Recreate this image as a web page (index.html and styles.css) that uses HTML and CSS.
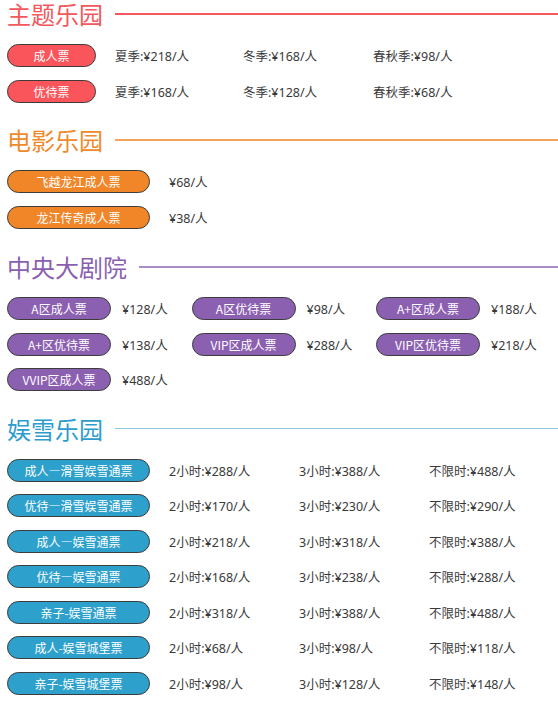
FILE: index.html
```html
<!DOCTYPE html>
<html lang="zh">
<head>
<meta charset="utf-8">
<link rel="stylesheet" href="styles.css">
</head>
<body>
<section class="sec red">
  <h2 class="title"><span>主题乐园</span><i class="line"></i></h2>
  <div class="row cols3">
    <span class="pill w89">成人票</span>
    <div class="prices"><span>夏季:¥218/人</span><span>冬季:¥168/人</span><span>春秋季:¥98/人</span></div>
  </div>
  <div class="row cols3">
    <span class="pill w89">优待票</span>
    <div class="prices"><span>夏季:¥168/人</span><span>冬季:¥128/人</span><span>春秋季:¥68/人</span></div>
  </div>
</section>

<section class="sec orange">
  <h2 class="title"><span>电影乐园</span><i class="line"></i></h2>
  <div class="row">
    <span class="pill w143">飞越龙江成人票</span>
    <div class="prices"><span>¥68/人</span></div>
  </div>
  <div class="row">
    <span class="pill w143">龙江传奇成人票</span>
    <div class="prices"><span>¥38/人</span></div>
  </div>
</section>

<section class="sec purple">
  <h2 class="title"><span>中央大剧院</span><i class="line"></i></h2>
  <div class="grid3">
    <div class="cell"><span class="pill w104">A区成人票</span><span>¥128/人</span></div>
    <div class="cell"><span class="pill w104">A区优待票</span><span>¥98/人</span></div>
    <div class="cell"><span class="pill w104">A+区成人票</span><span>¥188/人</span></div>
    <div class="cell"><span class="pill w104">A+区优待票</span><span>¥138/人</span></div>
    <div class="cell"><span class="pill w104">VIP区成人票</span><span>¥288/人</span></div>
    <div class="cell"><span class="pill w104">VIP区优待票</span><span>¥218/人</span></div>
    <div class="cell"><span class="pill w104">VVIP区成人票</span><span>¥488/人</span></div>
  </div>
</section>

<section class="sec blue">
  <h2 class="title"><span>娱雪乐园</span><i class="line"></i></h2>
  <div class="row"><span class="pill w143">成人—滑雪娱雪通票</span><div class="prices"><span>2小时:¥288/人</span><span>3小时:¥388/人</span><span>不限时:¥488/人</span></div></div>
  <div class="row"><span class="pill w143">优待—滑雪娱雪通票</span><div class="prices"><span>2小时:¥170/人</span><span>3小时:¥230/人</span><span>不限时:¥290/人</span></div></div>
  <div class="row"><span class="pill w143">成人—娱雪通票</span><div class="prices"><span>2小时:¥218/人</span><span>3小时:¥318/人</span><span>不限时:¥388/人</span></div></div>
  <div class="row"><span class="pill w143">优待—娱雪通票</span><div class="prices"><span>2小时:¥168/人</span><span>3小时:¥238/人</span><span>不限时:¥288/人</span></div></div>
  <div class="row"><span class="pill w143">亲子-娱雪通票</span><div class="prices"><span>2小时:¥318/人</span><span>3小时:¥388/人</span><span>不限时:¥488/人</span></div></div>
  <div class="row"><span class="pill w143">成人-娱雪城堡票</span><div class="prices"><span>2小时:¥68/人</span><span>3小时:¥98/人</span><span>不限时:¥118/人</span></div></div>
  <div class="row"><span class="pill w143">亲子-娱雪城堡票</span><div class="prices"><span>2小时:¥98/人</span><span>3小时:¥128/人</span><span>不限时:¥148/人</span></div></div>
</section>
</body>
</html>
```
FILE: styles.css
```css
html, body {
  margin: 0;
  padding: 0;
  background: #fff;
}
body {
  padding: 0 0 0 7px;
  font-family: "Noto Sans", "Noto Sans CJK SC", sans-serif;
  font-size: 12.5px;
  color: #3a3a3a;
}
.sec {
  margin-bottom: 17px;
}
.orange {
  margin-bottom: 18px;
}
.title {
  display: flex;
  align-items: center;
  height: 28px;
  margin: 0 0 10px 0;
  font-family: "Noto Sans CJK SC", sans-serif;
  font-weight: 400;
  font-size: 24px;
  line-height: 28px;
}
.title .line {
  flex: 1;
  height: 1.5px;
  margin-left: 12px;
}
.row {
  display: flex;
  align-items: center;
  height: 35.5px;
}
.pill {
  box-sizing: border-box;
  height: 23px;
  border: 1px solid #3c3c3c;
  border-radius: 12px;
  color: #fff;
  display: inline-flex;
  align-items: center;
  justify-content: center;
  font-family: "Noto Sans CJK SC", sans-serif;
  font-size: 12px;
  flex: none;
}
.w89 { width: 89px; }
.w104 { width: 104px; }
.w143 { width: 143px; }
.prices {
  display: flex;
  margin-left: 19px;
}
.prices span {
  width: 130px;
}
.cols3 .prices span:first-child { width: 128px; }
.grid3 {
  display: grid;
  grid-template-columns: 184.5px 184.5px 184.5px;
}
.cell {
  display: flex;
  align-items: center;
  gap: 11px;
  height: 35.5px;
}

.red .title { color: #f4575c; }
.red .line { background: #f4575c; }
.red .pill { background: #fb555c; }

.orange .title { color: #ef8a2c; }
.orange .line { background: #f3a35c; }
.orange .pill { background: #f08627; }

.purple .title { color: #8a5fb2; }
.purple .line { background: #a88cc8; }
.purple .pill { background: #8c60b1; }

.blue .title { color: #2e9ccc; }
.blue .line { background: #8ecbe3; }
.blue .pill { background: #2ea0cc; }
```
